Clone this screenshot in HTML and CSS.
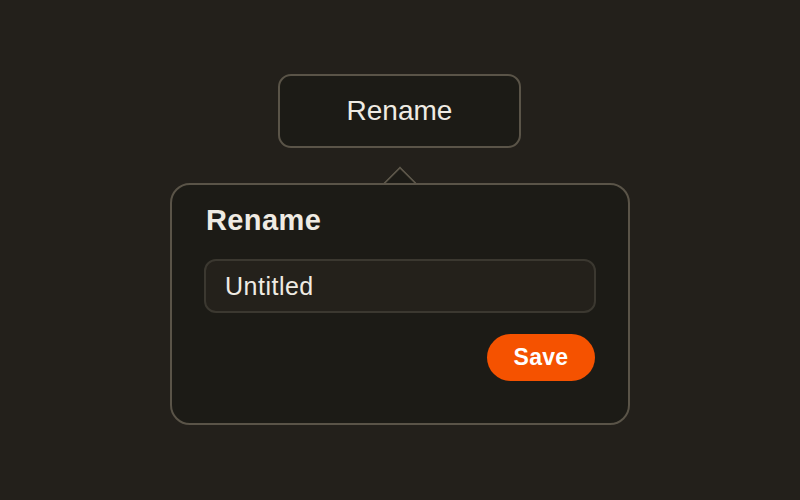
FILE: index.html
```html
<!DOCTYPE html>
<html>
<head>
<meta charset="utf-8">
<link rel="stylesheet" href="styles.css">
</head>
<body>
<div class="stage">
  <button class="trigger">Rename</button>
  <div class="popover">
    <h2 class="title">Rename</h2>
    <div class="field">Untitled</div>
    <div class="actions">
      <button class="save">Save</button>
    </div>
  </div>
</div>
</body>
</html>
```
FILE: styles.css
```css
html, body {
  margin: 0;
  padding: 0;
  background: #23201b;
  width: 800px;
  height: 500px;
  overflow: hidden;
  font-family: "Liberation Sans", Arial, sans-serif;
}
.stage {
  display: flex;
  flex-direction: column;
  align-items: center;
  padding-top: 74px;
}
.trigger {
  box-sizing: border-box;
  width: 243px;
  height: 74px;
  margin-left: -1px;
  background: #1c1b16;
  border: 2px solid #5a5448;
  border-radius: 13px;
  color: #efebe3;
  font-family: inherit;
  font-size: 28px;
  padding: 0;
}
.popover {
  position: relative;
  box-sizing: border-box;
  width: 460px;
  height: 242px;
  margin-top: 35px;
  background: #1c1b16;
  border: 2px solid #5a5448;
  border-radius: 20px;
  padding: 17px 32px 0 32px;
  display: flex;
  flex-direction: column;
}
.popover::before {
  content: "";
  position: absolute;
  left: 50%;
  top: -2px;
  width: 24px;
  height: 24px;
  background: #1c1b16;
  border-left: 2px solid #5a5448;
  border-top: 2px solid #5a5448;
  transform: translate(-50%, -50%) rotate(45deg);
  box-sizing: border-box;
  clip-path: polygon(0 0, 100% 0, 0 100%);
}
.title {
  margin: 0;
  font-size: 29px;
  font-weight: 700;
  line-height: 36px;
  letter-spacing: 0.4px;
  color: #efebe3;
  padding-left: 2px;
}
.field {
  box-sizing: border-box;
  margin-top: 21px;
  height: 54px;
  background: #24211b;
  border: 2px solid #3b3830;
  border-radius: 12px;
  padding: 0 19px;
  display: flex;
  align-items: center;
  color: #efebe3;
  font-size: 25px;
  letter-spacing: 0.5px;
}
.actions {
  display: flex;
  justify-content: flex-end;
  margin-top: 21px;
  padding-right: 1px;
}
.save {
  box-sizing: border-box;
  width: 108px;
  height: 47px;
  border: none;
  border-radius: 24px;
  background: #f55200;
  color: #ffffff;
  font-family: inherit;
  font-weight: 700;
  font-size: 23px;
  letter-spacing: 0.3px;
  padding: 0;
}
```
